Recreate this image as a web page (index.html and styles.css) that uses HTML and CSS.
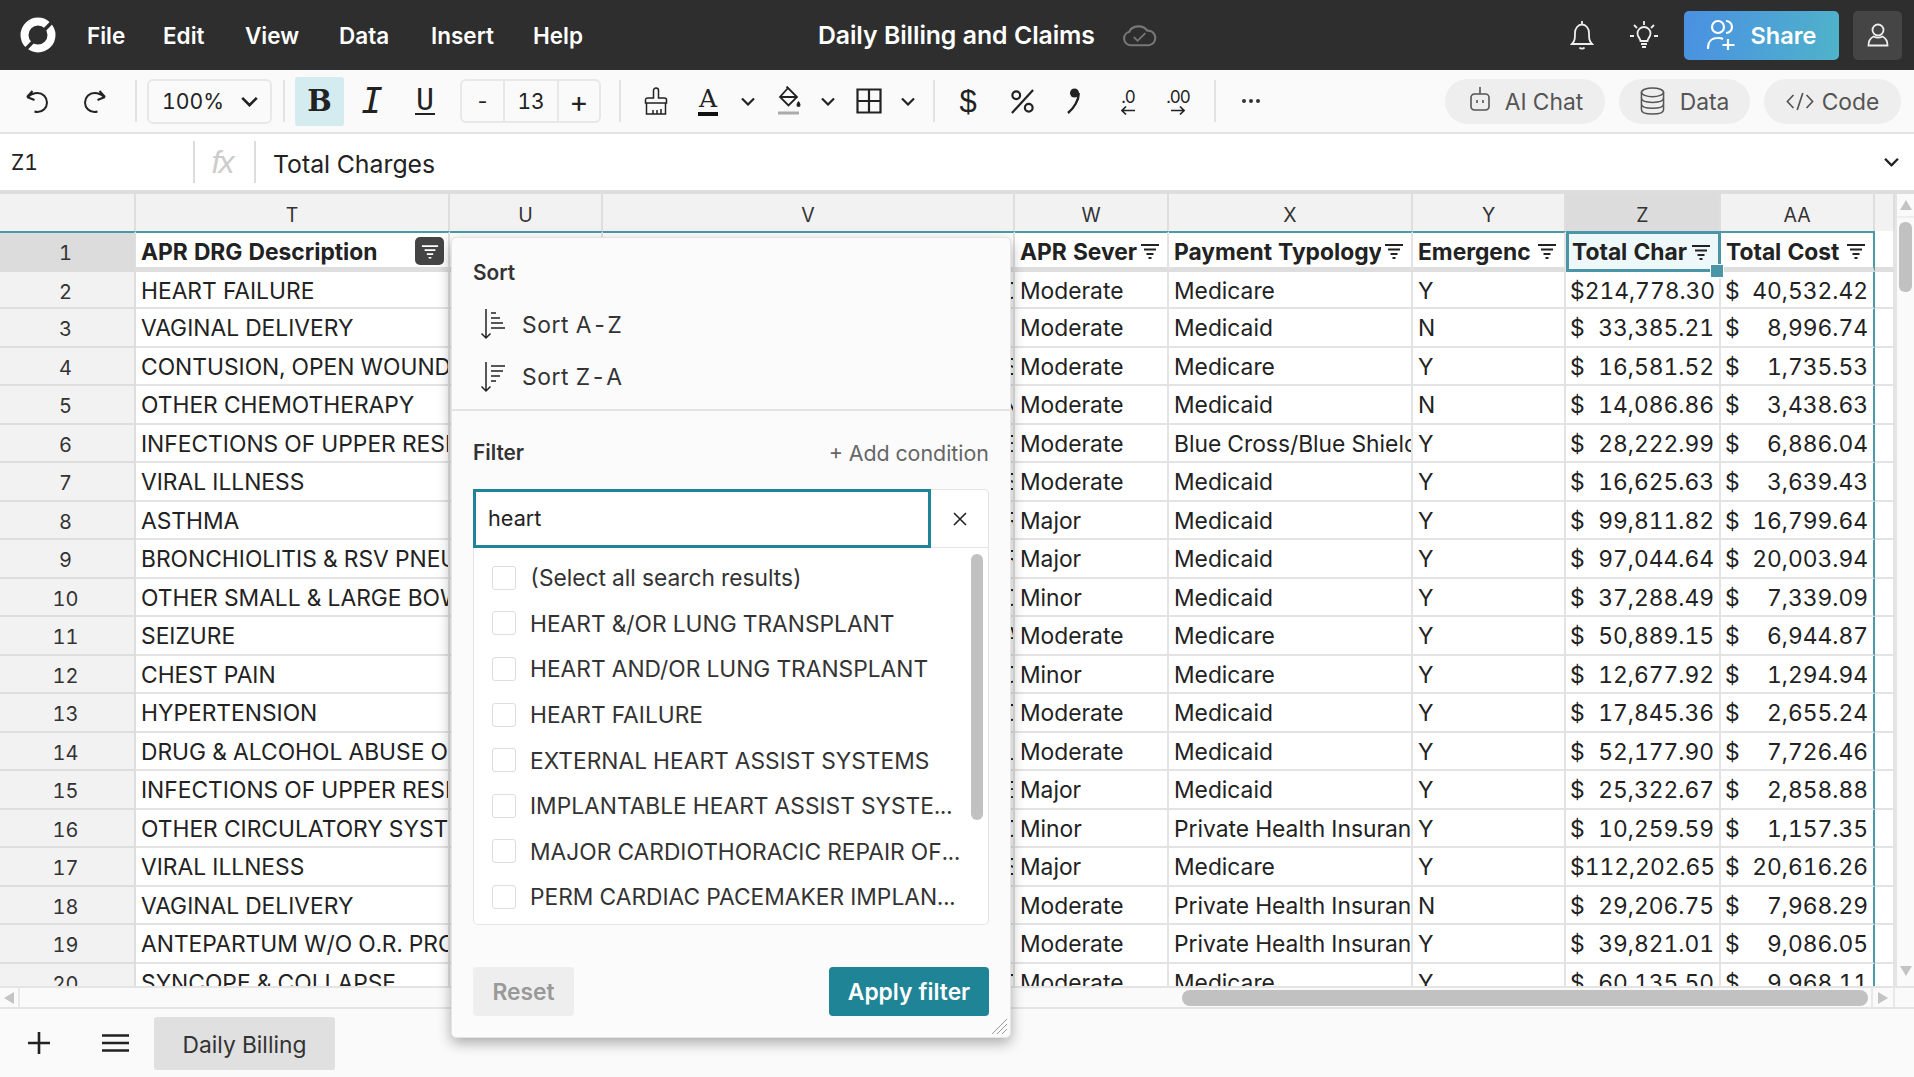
FILE: index.html
```html
<!DOCTYPE html>
<html lang="en">
<head>
<meta charset="utf-8">
<title>Daily Billing and Claims</title>
<link rel="stylesheet" href="styles.css">
</head>
<body>
<svg class="defs" width="0" height="0" aria-hidden="true">
  <symbol id="flt" viewBox="0 0 20 16"><path d="M1 2h18M4 6.500h12M6.500 11h7M8.500 15h3" fill="none" stroke="currentColor" stroke-width="2"/></symbol>
  <symbol id="chev" viewBox="0 0 14 9"><path d="M1 1.500l6 6 6-6" fill="none" stroke="currentColor" stroke-width="2.200"/></symbol>
</svg>
<div class="app">
  <header class="topbar">
    <svg class="logo" viewBox="0 0 36 36"><circle cx="18" cy="18" r="13.500" fill="none" stroke="#fff" stroke-width="8"/><path d="M4 34L33 4" stroke="#2e2e2e" stroke-width="3.500"/></svg>
    <nav class="menu"><span class="m-file">File</span><span class="m-edit">Edit</span><span class="m-view">View</span><span class="m-data">Data</span><span class="m-insert">Insert</span><span class="m-help">Help</span></nav>
    <div class="doc-title">Daily Billing and Claims</div>
    <svg class="cloud" viewBox="0 0 36 24"><path d="M9 22.500a7 7 0 0 1-1.500-13.800A10 8 0 0 1 26 7.500a7.500 7.500 0 0 1 1.500 15z" fill="none" stroke="#777" stroke-width="2.200"/><path d="M12 14l4 4 8-8" fill="none" stroke="#777" stroke-width="1.800"/></svg>
    <svg class="bell" viewBox="0 0 24 30" fill="none" stroke="#eee" stroke-width="1.800"><path d="M12 1v3M2 24c3-3 3-6 3-11a7 8.500 0 0 1 14 0c0 5 0 8 3 11zM9.500 27.500c1 1.500 4 1.500 5 0"/></svg>
    <svg class="bulb" viewBox="0 0 28 28" fill="none" stroke="#eee" stroke-width="1.800"><path d="M14 0v4M4 4l3 3M24 4l-3 3M0 15h4M24 15h4M10.500 20c0-3-3-3.500-3-7.500a6.500 6.500 0 0 1 13 0c0 4-3 4.500-3 7.500zM11 23h6M12 26h4"/></svg>
    <div class="share">
      <svg class="share-ic" viewBox="0 0 28 32" fill="none" stroke="#fff" stroke-width="2.200"><circle cx="11" cy="8" r="6"/><path d="M19 2a6 6 0 0 1 0 12M1 30c0-8 3-11 10-11 2 0 4 .300 5 1M21 20v11M15.500 26h12"/></svg>
      <span>Share</span>
    </div>
    <div class="profile"><svg class="prof-ic" viewBox="0 0 22 24" fill="none" stroke="#eee" stroke-width="1.800"><circle cx="11" cy="7" r="5.500"/><path d="M1.500 22.500c0-5 3-8 5-9 3 1.500 6 1.500 9 0 2 1 5 4 5 9z"/></svg></div>
  </header>

  <div class="toolbar">
    <div class="tool w-56"><svg class="ic-24" viewBox="0 0 26 24" fill="none" stroke="#222" stroke-width="2"><path d="M2 8l5.500-6M2 8l7.500 3M3 8c3-3 6-4 9.500-4a9.500 9.500 0 0 1 0 19c-1 0-2-.200-3-.500"/></svg></div>
    <div class="tool w-56"><svg class="ic-24" viewBox="0 0 26 24" fill="none" stroke="#222" stroke-width="2"><path d="M24 8l-5.500-6M24 8l-7.500 3M23 8c-3-3-6-4-9.500-4a9.500 9.500 0 0 0 0 19c1 0 2-.200 3-.500"/></svg></div>
    <i class="sep s-a"></i>
    <div class="zoom-box"><span>100%</span><svg class="chev" viewBox="0 0 14 9"><use href="#chev"/></svg></div>
    <i class="sep s-b"></i>
    <div class="tool w-49 active"><span class="glyph g-b">B</span></div>
    <div class="tool w-56"><span class="glyph g-i">I</span></div>
    <div class="tool w-50"><span class="glyph g-u">U</span></div>
    <div class="stepper"><span class="st-a">-</span><span class="st-b">13</span><span class="st-c">+</span></div>
    <i class="sep s-c"></i>
    <div class="tool w-52"><svg class="ic-paint" viewBox="0 0 24 28" fill="none" stroke="#222" stroke-width="1.500"><path d="M9.500 11V3.500a2.500 2.500 0 0 1 5 0V11h6a2 2 0 0 1 2 2v3H1.500v-3a2 2 0 0 1 2-2zM2.500 16v11h19V16M2 27h20M9 27v-4M13 27v-4M17 27v-5"/></svg></div>
    <div class="tool w-52"><span class="glyph g-a">A</span></div>
    <div class="tool w-28"><svg class="chev-s" viewBox="0 0 14 9"><use href="#chev"/></svg></div>
    <div class="tool w-54"><svg class="ic-fill" viewBox="0 0 24 30" fill="none" stroke="#222" stroke-width="1.800"><path d="M11 2l9 9-8.500 8.500L3 11z M11 2l-1.500-1.500M3 11h17"/><path d="M21.500 15c1.500 2 2 3 2 4a2 2 0 0 1-4 0c0-1 .500-2 2-4z" fill="#222" stroke="none"/><path d="M1 27h21" stroke="#aaa" stroke-width="3"/></svg></div>
    <div class="tool w-24"><svg class="chev-s" viewBox="0 0 14 9"><use href="#chev"/></svg></div>
    <div class="tool w-58"><svg class="ic-border" viewBox="0 0 26 26" fill="none" stroke="#222" stroke-width="2.200"><path d="M1.500 1.500h23v23h-23zM13 1.500v23M1.500 13h23"/></svg></div>
    <div class="tool w-20"><svg class="chev-s" viewBox="0 0 14 9"><use href="#chev"/></svg></div>
    <i class="sep s-d"></i>
    <div class="tool w-56"><span class="glyph g-d">$</span></div>
    <div class="tool w-52"><svg class="ic-pct" viewBox="0 0 26 26" fill="none" stroke="#222" stroke-width="2.300"><path d="M24 1L2 25"/><circle cx="6.500" cy="6.500" r="4"/><circle cx="19.500" cy="19.500" r="4"/></svg></div>
    <div class="tool w-54"><svg class="ic-comma" viewBox="0 0 14 26"><circle cx="8.500" cy="5" r="4.500" fill="#222"/><path d="M12.700 5C13 12 8 20 2 25" fill="none" stroke="#222" stroke-width="2.400"/></svg></div>
    <div class="tool w-52 col"><span class="dec">.0</span><svg class="arr" viewBox="0 0 14 9" fill="none" stroke="#222" stroke-width="1.600"><path d="M14 4.500H1M5 .500l-4 4 4 4"/></svg></div>
    <div class="tool w-48 col"><span class="dec">.00</span><svg class="arr" viewBox="0 0 14 9" fill="none" stroke="#222" stroke-width="1.600"><path d="M0 4.500h13M9 .500l4 4-4 4"/></svg></div>
    <i class="sep s-e"></i>
    <div class="tool w-70"><svg class="dots" viewBox="0 0 18 4"><circle cx="2" cy="2" r="2"/><circle cx="9" cy="2" r="2"/><circle cx="16" cy="2" r="2"/></svg></div>
    <div class="pills">
      <div class="pill p-ai"><svg class="ic-bot" viewBox="0 0 20 26" fill="none" stroke="#555" stroke-width="1.600"><path d="M10 1v7M4.500 8h11A3.500 3.500 0 0 1 19 11.500v9a3.500 3.500 0 0 1-3.500 3.500h-11A3.500 3.500 0 0 1 1 20.500v-9A3.500 3.500 0 0 1 4.500 8zM7 14v3M13 14v3"/></svg><span>AI Chat</span></div>
      <div class="pill p-data"><svg class="ic-db" viewBox="0 0 26 30" fill="none" stroke="#555" stroke-width="1.600"><ellipse cx="13" cy="6" rx="11.500" ry="4.500"/><path d="M1.500 6v18c0 3 5 4.500 11.500 4.500s11.500-1.500 11.500-4.500V6M1.500 12c0 3 5 4.500 11.500 4.500S24.500 15 24.500 12M1.500 18c0 3 5 4.500 11.500 4.500S24.500 21 24.500 18"/></svg><span>Data</span></div>
      <div class="pill p-code"><svg class="ic-code" viewBox="0 0 30 20" fill="none" stroke="#555" stroke-width="1.800"><path d="M8 3L1.500 10 8 17M22 3l6.500 7-6.500 7M18 1l-6 18"/></svg><span>Code</span></div>
    </div>
  </div>

  <div class="formula">
    <div class="cell-ref">Z1</div>
    <i class="fsep"></i>
    <div class="fx">fx</div>
    <i class="fsep"></i>
    <div class="fval">Total Charges</div>
    <svg class="fchev" viewBox="0 0 14 9"><use href="#chev"/></svg>
  </div>

  <div class="sheet">
    <div class="grid">
      <div class="h rh"></div><div class="h">T</div><div class="h">U</div><div class="h">V</div><div class="h">W</div><div class="h">X</div><div class="h">Y</div><div class="h h-on">Z</div><div class="h">AA</div><div class="h"></div>

      <div class="rh r1 rh-on">1</div>
      <div class="c r1 hd"><b>APR DRG Description</b><span class="flt-on"><svg viewBox="0 0 20 16"><use href="#flt"/></svg></span></div>
      <div class="c r1"></div><div class="c r1"></div>
      <div class="c r1 hd"><b>APR Sever</b><svg class="flt" viewBox="0 0 20 16"><use href="#flt"/></svg></div>
      <div class="c r1 hd"><b>Payment Typology</b><svg class="flt" viewBox="0 0 20 16"><use href="#flt"/></svg></div>
      <div class="c r1 hd"><b>Emergenc</b><svg class="flt" viewBox="0 0 20 16"><use href="#flt"/></svg></div>
      <div class="c r1 hd sel"><b>Total Char</b><svg class="flt" viewBox="0 0 20 16"><use href="#flt"/></svg><i class="handle"></i></div>
      <div class="c r1 hd edge"><b>Total Cost</b><svg class="flt" viewBox="0 0 20 16"><use href="#flt"/></svg></div>
      <div class="c r1x"></div>

      <div class="rh">2</div><div class="c">HEART FAILURE</div><div class="c"></div><div class="c v"><span>C</span></div><div class="c">Moderate</div><div class="c">Medicare</div><div class="c">Y</div><div class="c n"><span>$214,778.30</span></div><div class="c n edge"><span>$</span><span>40,532.42</span></div><div class="c"></div>
      <div class="rh">3</div><div class="c">VAGINAL DELIVERY</div><div class="c"></div><div class="c v"><span>I</span></div><div class="c">Moderate</div><div class="c">Medicaid</div><div class="c">N</div><div class="c n"><span>$</span><span>33,385.21</span></div><div class="c n edge"><span>$</span><span>8,996.74</span></div><div class="c"></div>
      <div class="rh">4</div><div class="c">CONTUSION, OPEN WOUND</div><div class="c"></div><div class="c v"><span>S</span></div><div class="c">Moderate</div><div class="c">Medicare</div><div class="c">Y</div><div class="c n"><span>$</span><span>16,581.52</span></div><div class="c n edge"><span>$</span><span>1,735.53</span></div><div class="c"></div>
      <div class="rh">5</div><div class="c">OTHER CHEMOTHERAPY</div><div class="c"></div><div class="c v"><span>N</span></div><div class="c">Moderate</div><div class="c">Medicaid</div><div class="c">N</div><div class="c n"><span>$</span><span>14,086.86</span></div><div class="c n edge"><span>$</span><span>3,438.63</span></div><div class="c"></div>
      <div class="rh">6</div><div class="c">INFECTIONS OF UPPER RESI</div><div class="c"></div><div class="c v"><span>E</span></div><div class="c">Moderate</div><div class="c">Blue Cross/Blue Shield</div><div class="c">Y</div><div class="c n"><span>$</span><span>28,222.99</span></div><div class="c n edge"><span>$</span><span>6,886.04</span></div><div class="c"></div>
      <div class="rh">7</div><div class="c">VIRAL ILLNESS</div><div class="c"></div><div class="c v"><span>S</span></div><div class="c">Moderate</div><div class="c">Medicaid</div><div class="c">Y</div><div class="c n"><span>$</span><span>16,625.63</span></div><div class="c n edge"><span>$</span><span>3,639.43</span></div><div class="c"></div>
      <div class="rh">8</div><div class="c">ASTHMA</div><div class="c"></div><div class="c v"><span>R</span></div><div class="c">Major</div><div class="c">Medicaid</div><div class="c">Y</div><div class="c n"><span>$</span><span>99,811.82</span></div><div class="c n edge"><span>$</span><span>16,799.64</span></div><div class="c"></div>
      <div class="rh">9</div><div class="c">BRONCHIOLITIS &amp; RSV PNEU</div><div class="c"></div><div class="c v"><span>R</span></div><div class="c">Major</div><div class="c">Medicaid</div><div class="c">Y</div><div class="c n"><span>$</span><span>97,044.64</span></div><div class="c n edge"><span>$</span><span>20,003.94</span></div><div class="c"></div>
      <div class="rh">10</div><div class="c">OTHER SMALL &amp; LARGE BOW</div><div class="c"></div><div class="c v"><span>C</span></div><div class="c">Minor</div><div class="c">Medicaid</div><div class="c">Y</div><div class="c n"><span>$</span><span>37,288.49</span></div><div class="c n edge"><span>$</span><span>7,339.09</span></div><div class="c"></div>
      <div class="rh">11</div><div class="c">SEIZURE</div><div class="c"></div><div class="c v"><span>A</span></div><div class="c">Moderate</div><div class="c">Medicare</div><div class="c">Y</div><div class="c n"><span>$</span><span>50,889.15</span></div><div class="c n edge"><span>$</span><span>6,944.87</span></div><div class="c"></div>
      <div class="rh">12</div><div class="c">CHEST PAIN</div><div class="c"></div><div class="c v"><span>C</span></div><div class="c">Minor</div><div class="c">Medicare</div><div class="c">Y</div><div class="c n"><span>$</span><span>12,677.92</span></div><div class="c n edge"><span>$</span><span>1,294.94</span></div><div class="c"></div>
      <div class="rh">13</div><div class="c">HYPERTENSION</div><div class="c"></div><div class="c v"><span>C</span></div><div class="c">Moderate</div><div class="c">Medicaid</div><div class="c">Y</div><div class="c n"><span>$</span><span>17,845.36</span></div><div class="c n edge"><span>$</span><span>2,655.24</span></div><div class="c"></div>
      <div class="rh">14</div><div class="c">DRUG &amp; ALCOHOL ABUSE O</div><div class="c"></div><div class="c v"><span>L</span></div><div class="c">Moderate</div><div class="c">Medicaid</div><div class="c">Y</div><div class="c n"><span>$</span><span>52,177.90</span></div><div class="c n edge"><span>$</span><span>7,726.46</span></div><div class="c"></div>
      <div class="rh">15</div><div class="c">INFECTIONS OF UPPER RESI</div><div class="c"></div><div class="c v"><span>E</span></div><div class="c">Major</div><div class="c">Medicaid</div><div class="c">Y</div><div class="c n"><span>$</span><span>25,322.67</span></div><div class="c n edge"><span>$</span><span>2,858.88</span></div><div class="c"></div>
      <div class="rh">16</div><div class="c">OTHER CIRCULATORY SYST</div><div class="c"></div><div class="c v"><span>C</span></div><div class="c">Minor</div><div class="c">Private Health Insuran</div><div class="c">Y</div><div class="c n"><span>$</span><span>10,259.59</span></div><div class="c n edge"><span>$</span><span>1,157.35</span></div><div class="c"></div>
      <div class="rh">17</div><div class="c">VIRAL ILLNESS</div><div class="c"></div><div class="c v"><span>S</span></div><div class="c">Major</div><div class="c">Medicare</div><div class="c">Y</div><div class="c n"><span>$112,202.65</span></div><div class="c n edge"><span>$</span><span>20,616.26</span></div><div class="c"></div>
      <div class="rh">18</div><div class="c">VAGINAL DELIVERY</div><div class="c"></div><div class="c v"><span>I</span></div><div class="c">Moderate</div><div class="c">Private Health Insuran</div><div class="c">N</div><div class="c n"><span>$</span><span>29,206.75</span></div><div class="c n edge"><span>$</span><span>7,968.29</span></div><div class="c"></div>
      <div class="rh">19</div><div class="c">ANTEPARTUM W/O O.R. PRO</div><div class="c"></div><div class="c v"><span>I</span></div><div class="c">Moderate</div><div class="c">Private Health Insuran</div><div class="c">Y</div><div class="c n"><span>$</span><span>39,821.01</span></div><div class="c n edge"><span>$</span><span>9,086.05</span></div><div class="c"></div>
      <div class="rh">20</div><div class="c">SYNCOPE &amp; COLLAPSE</div><div class="c"></div><div class="c v"><span>C</span></div><div class="c">Moderate</div><div class="c">Medicare</div><div class="c">Y</div><div class="c n"><span>$</span><span>60,135.50</span></div><div class="c n edge"><span>$</span><span>9,968.11</span></div><div class="c"></div>
    </div>
    <div class="vscroll">
      <div class="up"><svg class="tri" viewBox="0 0 12 12"><path d="M6 1l6 10H0z"/></svg></div>
      <div class="vtrack"><i class="vthumb"></i></div>
      <div class="down"><svg class="tri" viewBox="0 0 12 12"><path d="M6 11L0 1h12z"/></svg></div>
    </div>
  </div>

  <div class="hscroll">
    <div class="left"><svg class="tri" viewBox="0 0 12 12"><path d="M1 6l10-6v12z"/></svg></div>
    <div class="htrack"><i class="hthumb"></i></div>
    <div class="right"><svg class="tri" viewBox="0 0 12 12"><path d="M11 6L1 0v12z"/></svg></div>
    <div class="corner"></div>
  </div>

  <footer class="tabs">
    <svg class="tab-plus" viewBox="0 0 22 22"><path d="M11 0v22M0 11h22" stroke="#222" stroke-width="2.600"/></svg>
    <svg class="tab-menu" viewBox="0 0 27 18"><path d="M0 1.500h27M0 9h27M0 16.500h27" stroke="#222" stroke-width="2.600"/></svg>
    <div class="tab">Daily Billing</div>
  </footer>
</div>

<section class="popup">
  <div class="pop-sort">
    <div class="pop-title">Sort</div>
    <div class="sort-item si-a"><svg class="sort-ic" viewBox="0 0 26 32" fill="none" stroke="#222" stroke-width="1.500"><path d="M6 1v29M1.500 25.500L6 30l4.500-4.500M11 5h5M11 10h9M11 15h12M11 20h14"/></svg><span>Sort A-Z</span></div>
    <div class="sort-item"><svg class="sort-ic" viewBox="0 0 26 32" fill="none" stroke="#222" stroke-width="1.500"><path d="M6 1v29M1.500 25.500L6 30l4.500-4.500M11 5h14M11 10h12M11 15h9M11 20h5"/></svg><span>Sort Z-A</span></div>
  </div>
  <div class="pop-filter">
    <div class="filter-head"><div class="pop-title">Filter</div><div class="add-cond">+ Add condition</div></div>
    <div class="search"><div class="search-input">heart</div><div class="search-x"><svg class="x-ic" viewBox="0 0 14 14"><path d="M1 1l12 12M13 1L1 13" stroke="#222" stroke-width="1.600"/></svg></div></div>
    <div class="list">
      <i class="list-thumb"></i>
      <div class="opt first"><i class="cb"></i><span>(Select all search results)</span></div>
      <div class="opt"><i class="cb"></i><span>HEART &amp;/OR LUNG TRANSPLANT</span></div>
      <div class="opt"><i class="cb"></i><span>HEART AND/OR LUNG TRANSPLANT</span></div>
      <div class="opt"><i class="cb"></i><span>HEART FAILURE</span></div>
      <div class="opt"><i class="cb"></i><span>EXTERNAL HEART ASSIST SYSTEMS</span></div>
      <div class="opt"><i class="cb"></i><span>IMPLANTABLE HEART ASSIST SYSTE...</span></div>
      <div class="opt"><i class="cb"></i><span>MAJOR CARDIOTHORACIC REPAIR OF...</span></div>
      <div class="opt"><i class="cb"></i><span>PERM CARDIAC PACEMAKER IMPLAN...</span></div>
    </div>
    <div class="pop-actions"><div class="btn-reset">Reset</div><div class="btn-apply">Apply filter</div></div>
  </div>
  <svg class="resize" viewBox="0 0 16 16" fill="none" stroke="#999" stroke-width="1"><path d="M1 16L16 1M6 16L16 6M11 16l5-5"/></svg>
</section>
</body>
</html>
```
FILE: styles.css
```css
* { box-sizing: border-box; }
html, body { margin: 0; height: 100%; overflow: hidden; }
body { font-family: Inter, "Noto Sans", sans-serif; font-size: 22.800px; color: #222; background: #fafafa; position: relative; font-variant-numeric: tabular-nums; }
i { display: block; font-style: normal; }
.defs { position: absolute; }
.app { width: 1914px; height: 1077px; display: flex; flex-direction: column; }

/* top bar */
.topbar { height: 70px; flex: none; background: #2e2e2e; color: #fff; display: flex; align-items: center; position: relative; }
.logo { width: 36px; height: 36px; margin-left: 20px; flex: none; }
.menu { display: flex; margin-left: 31px; font-weight: 600; font-size: 22.500px; }
.m-file { width: 76px; } .m-edit { width: 82px; } .m-view { width: 94px; } .m-data { width: 92px; } .m-insert { width: 102px; }
.doc-title { position: absolute; left: 818px; top: 19px; font-size: 24.800px; font-weight: 600; white-space: nowrap; line-height: 32px; letter-spacing: -.1px; }
.cloud { position: absolute; left: 1122px; top: 23px; width: 35px; height: 24px; }
.bell { margin-left: auto; width: 24px; height: 30px; flex: none; }
.bulb { margin-left: 36px; width: 28px; height: 28px; flex: none; }
.share { margin-left: 26px; width: 155px; height: 49px; border-radius: 5px; background: linear-gradient(100deg, #4a90e2, #4fb3c9); display: flex; align-items: center; justify-content: center; gap: 16px; font-size: 23.500px; font-weight: 600; flex: none; }
.share-ic { width: 28px; height: 32px; }
.profile { margin: 0 12px 0 14px; width: 49px; height: 49px; background: #454545; border-radius: 5px; display: flex; align-items: center; justify-content: center; flex: none; }
.prof-ic { width: 22px; height: 24px; }

/* toolbar */
.toolbar { height: 64px; flex: none; background: #fafafa; border-bottom: 2px solid #e4e4e4; display: flex; align-items: center; padding: 0 13px 0 10px; }
.tool { height: 49px; display: flex; align-items: center; justify-content: center; flex: none; }
.tool.col { flex-direction: column; gap: 0; }
.w-20 { width: 20px; } .w-24 { width: 24px; } .w-28 { width: 28px; } .w-48 { width: 48px; } .w-49 { width: 49px; } .w-50 { width: 50px; } .w-52 { width: 52px; } .w-54 { width: 54px; } .w-56 { width: 56px; } .w-58 { width: 58px; } .w-70 { width: 70px; }
.active { background: #d4ebf0; border-radius: 3px; }
.ic-24 { width: 26px; height: 24px; }
.sep { width: 2px; height: 42px; background: #e2e2e2; flex: none; }
.s-a { margin: 0 10px 0 13px; } .s-b { margin: 0 10px 0 11px; } .s-c { margin: 0 9px 0 18px; } .s-d { margin: 0 5px 0 15px; } .s-e { margin-left: 12px; }
.zoom-box { width: 125px; height: 45px; border: 2px solid #e8e8e8; border-radius: 6px; display: flex; align-items: center; padding: 0 12px 0 13px; justify-content: space-between; font-size: 21.200px; flex: none; }
.chev { width: 17px; height: 11px; color: #222; }
.chev-s { width: 14px; height: 9px; color: #222; }
.glyph { line-height: 1; color: #222; }
.g-b { font-family: "DejaVu Serif", serif; font-weight: 700; font-size: 29px; }
.g-i { font-family: "DejaVu Sans Mono", monospace; font-style: italic; font-size: 36px; }
.g-u { font-family: "DejaVu Sans Mono", monospace; font-size: 30px; border-bottom: 2px solid #222; line-height: 26px; padding: 0 1px; }
.g-a { font-family: "DejaVu Serif", serif; font-size: 25px; border-bottom: 4px solid #111; line-height: 26px; padding: 0 1px; }
.g-d { font-family: "Liberation Sans", sans-serif; font-size: 31px; }
.ic-pct { width: 25px; height: 25px; }
.ic-comma { width: 14px; height: 26px; margin-right: 4px; }
.dec { font-size: 17px; line-height: 18px; letter-spacing: -1px; }
.arr { width: 14px; height: 9px; }
.dots { width: 18px; height: 4px; fill: #333; }
.ic-paint { width: 24px; height: 28px; }
.ic-fill { width: 24px; height: 30px; }
.ic-border { width: 26px; height: 26px; }
.stepper { margin-left: 10px; width: 141px; height: 44px; border: 2px solid #e8e8e8; border-radius: 6px; display: flex; align-items: center; flex: none; font-size: 21px; }
.stepper span { display: flex; align-items: center; justify-content: center; height: 100%; }
.st-a { width: 41px; } .st-b { width: 56px; border: solid #e8e8e8; border-width: 0 2px; } .st-c { width: 40px; font-size: 29px; }
.pills { margin-left: auto; display: flex; gap: 14px; }
.pill { height: 45px; border-radius: 23px; background: #eee; color: #555; display: flex; align-items: center; justify-content: center; gap: 15px; font-size: 22.800px; }
.p-ai { width: 160px; padding-left: 3px; } .p-data { width: 131px; } .p-code { width: 137px; gap: 8px; }
.ic-bot { width: 20px; height: 26px; margin-top: -4px; }
.ic-db { width: 25px; height: 30px; }
.ic-code { width: 28px; height: 19px; }

/* formula bar */
.formula { height: 56px; flex: none; background: #fff; display: flex; align-items: center; }
.cell-ref { width: 193px; padding: 1px 0 0 11px; font-size: 21px; }
.fsep { width: 2px; height: 42px; background: #ddd; flex: none; }
.fx { width: 59px; padding-right: 5px; text-align: center; font-family: "Liberation Sans", sans-serif; font-style: italic; font-size: 32px; color: #ccc; letter-spacing: -2px; line-height: 36px; }
.fval { flex: 1; padding: 3px 0 0 17px; font-size: 24.800px; }
.fchev { width: 15px; height: 10px; margin-right: 15px; color: #222; flex: none; }

/* sheet */
.sheet { height: 796px; flex: none; border-top: 4px solid #ddd; display: flex; background: #fff; overflow: hidden; }
.grid { width: 1895px; flex: none; display: grid; grid-template-columns: 136px 314px 153px 412px 154px 244px 153px 155px 154px 20px; grid-template-rows: 37px 41px 37px repeat(18, 38.500px); }
.h { background: #f2f2f2; border: solid #dedede; border-width: 0 2px 0 0; display: flex; align-items: center; justify-content: center; font-size: 19.500px; color: #333; padding-top: 4px; }
.h-on { background: #dcdcdc; }
.rh { background: #f2f2f2; border: solid #dedede; border-width: 0 2px 2px 0; display: flex; align-items: center; justify-content: center; font-size: 20px; color: #333; padding: 4px 3px 0 0; }
.rh.h { border-bottom-width: 0; }
.rh-on { background: #dcdcdc; }
.r1.rh { border-bottom: 5px solid #dcdcdc; padding-top: 5px; }
.c { background: #fff; border: solid #e3e3e3; border-width: 0 2px 2px 0; padding: 1px 2px 0 5px; display: flex; align-items: center; white-space: nowrap; overflow: hidden; min-width: 0; }
.r1 { border-top: 2px solid #4a9aa8; }
.c.r1 { border-bottom: 5px solid #dedede; padding-top: 2px; }
.r1x { border-bottom: 5px solid #dedede; }
.hd { padding-right: 7px; position: relative; overflow: visible; }
.hd b { flex: 1; min-width: 0; overflow: hidden; font-weight: 700; }
.flt { width: 20px; height: 16px; margin-left: 3px; flex: none; color: #222; }
.flt-on { width: 29px; height: 28px; margin-right: -3px; background: #444; border-radius: 5px; color: #fff; display: flex; align-items: center; justify-content: center; flex: none; }
.flt-on svg { width: 18px; height: 15px; }
.c.sel { background: #eef7f9; border: 3px solid #4a96a6; padding: 0 7px 0 3px; z-index: 2; }
.handle { position: absolute; right: -6px; bottom: -9px; width: 14px; height: 14px; background: #4a96a6; border: 1px solid #fff; }
.n { justify-content: space-between; padding-right: 5px; padding-left: 4px; }
.edge { border-right: 2px solid #4a9aa8; }
.v { justify-content: flex-end; }
.v span { margin-right: -8px; }

/* scrollbars */
.vscroll { width: 19px; flex: none; background: #fafafa; border-left: 2px solid #e4e4e4; display: flex; flex-direction: column; }
.up { height: 24px; border-bottom: 2px solid #eee; display: flex; align-items: center; justify-content: center; flex: none; }
.down { height: 30px; display: flex; align-items: center; justify-content: center; flex: none; }
.vtrack { flex: 1; padding: 4px 2px 0 2px; }
.vthumb { width: 13px; height: 70px; background: #c1c1c1; border-radius: 6px; }
.tri { width: 12px; height: 12px; fill: #c4c4c4; }
.hscroll { height: 23px; flex: none; background: #fafafa; border-top: 2px solid #e4e4e4; border-bottom: 2px solid #e4e4e4; display: flex; align-items: center; }
.left { width: 20px; height: 100%; border-right: 2px solid #e8e8e8; display: flex; align-items: center; justify-content: center; flex: none; }
.htrack { width: 1851px; padding-left: 1162px; flex: none; }
.hthumb { width: 686px; height: 16px; background: #c1c1c1; border-radius: 8px; }
.right { width: 24px; height: 100%; border: solid #e8e8e8; border-width: 0 2px; display: flex; align-items: center; justify-content: center; flex: none; }
.corner { flex: 1; }

/* sheet tabs */
.tabs { flex: 1; background: #fafafa; display: flex; align-items: center; padding: 0 0 0 28px; }
.tab-plus { width: 22px; height: 22px; flex: none; }
.tab-menu { width: 27px; height: 18px; margin-left: 52px; flex: none; }
.tab { margin-left: 25px; width: 181px; height: 53px; background: #e0e0e0; border-radius: 3px; display: flex; align-items: center; justify-content: center; font-size: 22.800px; color: #333; margin-top: 1px; padding-top: 1px; }

/* popup */
.popup { position: absolute; left: 451px; top: 237px; width: 560px; height: 801px; background: #fbfbfb; border: 1px solid #e4e4e4; border-radius: 5px; box-shadow: 0 5px 14px rgba(0,0,0,.32); display: flex; flex-direction: column; }
.pop-sort { height: 173px; border-bottom: 2px solid #e4e4e4; padding: 21px 21px 0; }
.pop-title { font-weight: 600; font-size: 20.800px; line-height: 28px; color: #333; }
.sort-item { display: flex; align-items: center; gap: 16px; height: 52.500px; padding-left: 7px; font-size: 22.800px; color: #333; letter-spacing: .6px; }
.si-a { margin-top: 11px; }
.sort-ic { width: 26px; height: 32px; }
.pop-filter { flex: 1; padding: 28px 21px 0; display: flex; flex-direction: column; }
.filter-head { display: flex; justify-content: space-between; align-items: center; height: 28px; }
.add-cond { color: #666; font-size: 21.400px; }
.search { display: flex; margin-top: 22px; height: 59px; flex: none; }
.search-input { width: 458px; height: 59px; border: 3px solid #1f8496; background: #fff; display: flex; align-items: center; padding: 0 0 2px 12px; font-size: 21.670px; }
.search-x { flex: 1; background: #fff; border: 1px solid #e4e4e4; border-left: 0; border-radius: 0 5px 0 0; display: flex; align-items: center; justify-content: center; }
.x-ic { width: 14px; height: 14px; }
.list { height: 377px; background: #fff; border: 1px solid #e4e4e4; border-top: 0; border-radius: 0 0 5px 5px; padding: 7px 0 0 18px; position: relative; overflow: hidden; flex: none; }
.list-thumb { position: absolute; right: 5px; top: 6px; width: 12px; height: 266px; background: #c1c1c1; border-radius: 6px; }
.opt { height: 45.600px; display: flex; align-items: center; gap: 14px; font-size: 22.750px; white-space: nowrap; color: #333; }
.cb { width: 24px; height: 24px; border: 1px solid #ddd; border-radius: 3px; background: #fff; flex: none; }
.pop-actions { display: flex; justify-content: space-between; margin-top: 42px; }
.btn-reset { width: 101px; height: 49px; background: #eee; color: #999; border-radius: 4px; display: flex; align-items: center; justify-content: center; font-weight: 600; font-size: 22.800px; }
.btn-apply { width: 160px; height: 49px; background: #1f8496; color: #fff; border-radius: 4px; display: flex; align-items: center; justify-content: center; font-weight: 600; font-size: 22.800px; }
.resize { position: absolute; right: 3px; bottom: 3px; width: 16px; height: 16px; }
```
